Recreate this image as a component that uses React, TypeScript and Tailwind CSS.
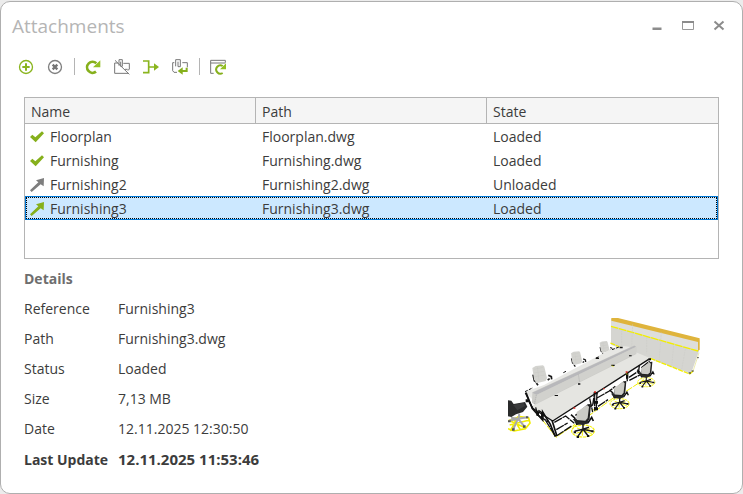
import React from "react";

type Kind = "check" | "arrow-off" | "arrow-on";

const rows: { name: string; path: string; state: string; kind: Kind; selected?: boolean }[] = [
  { name: "Floorplan", path: "Floorplan.dwg", state: "Loaded", kind: "check" },
  { name: "Furnishing", path: "Furnishing.dwg", state: "Loaded", kind: "check" },
  { name: "Furnishing2", path: "Furnishing2.dwg", state: "Unloaded", kind: "arrow-off" },
  { name: "Furnishing3", path: "Furnishing3.dwg", state: "Loaded", kind: "arrow-on", selected: true },
];

const details = [
  ["Reference", "Furnishing3"],
  ["Path", "Furnishing3.dwg"],
  ["Status", "Loaded"],
  ["Size", "7,13 MB"],
  ["Date", "12.11.2025 12:30:50"],
];

function RowIcon({ kind }: { kind: Kind }) {
  return (
    <svg viewBox="0 0 42 42" className="size-3.5 shrink-0" aria-hidden="true">
      {kind === "check" ? (
        <path d="M0 21 L7 14 L16 22 L36 4 L42 10 L17 37 Z" fill="#86b01c" />
      ) : (
        <path
          d="M0 37 L25 13 L18 7 L42 0 L41 25 L32 19 L5 42 Z"
          fill={kind === "arrow-on" ? "#86b01c" : "#7e7e7e"}
        />
      )}
    </svg>
  );
}

function ToolButton({ label, children }: { label: string; children: React.ReactNode }) {
  return (
    <button type="button" aria-label={label} className="size-4">
      <svg viewBox="0 0 48 48" className="block size-4" fill="none">
        {children}
      </svg>
    </button>
  );
}

function Separator() {
  return <div className="mx-2.5 h-[17px] w-[2px] border-r border-[#b4b4b4]" />;
}

function Toolbar() {
  return (
    <div role="toolbar" aria-label="Attachment actions" className="flex items-center px-[17px]">
      <div className="flex gap-[13px]">
        <ToolButton label="Attach">
          <circle cx="24" cy="24" r="19.5" stroke="#8ab51e" strokeWidth="4" />
          <path d="M24 13V35M13 24H35" stroke="#8ab51e" strokeWidth="6" />
        </ToolButton>
        <ToolButton label="Detach">
          <circle cx="24" cy="24" r="19.5" stroke="#808080" strokeWidth="4" />
          <path d="M17 17L31 31M31 17L17 31" stroke="#757575" strokeWidth="7" />
        </ToolButton>
      </div>
      <Separator />
      <div className="flex gap-[13px]">
        <ToolButton label="Reload">
          <path d="M33 38A16.500 16.500 0 1 1 34 13" stroke="#86b01c" strokeWidth="8" />
          <path d="M46 4V25H24Z" fill="#94c024" />
        </ToolButton>
        <ToolButton label="Unload">
          <path
            d="M12 12H2V43H43M28 13H46V31L41 34M15 20V2H25V22H20V8M3 4L46 46M33 31H41"
            stroke="#777777"
            strokeWidth="3"
          />
        </ToolButton>
        <ToolButton label="Bind">
          <path d="M0 6H17V41H0M17 24H38" stroke="#8ab51e" strokeWidth="5" />
          <path d="M33 13L48 24L33 35Z" fill="#8ab51e" />
        </ToolButton>
        <ToolButton label="Insert">
          <path
            d="M7 11H2V35L6 40H15M31 11H46V25M11 22V2H25V23H18V8"
            stroke="#777777"
            strokeWidth="3"
          />
          <path d="M44 26V36H29" stroke="#86b01c" strokeWidth="6" />
          <path d="M17 36L32 25V47Z" fill="#86b01c" />
        </ToolButton>
      </div>
      <Separator />
      <ToolButton label="Refresh list">
        <path d="M11 43H2V4H46V11M2 12H46" stroke="#777777" strokeWidth="3" />
        <path d="M38 42A12.500 12.500 0 1 1 38 21" stroke="#86b01c" strokeWidth="6" />
        <path d="M48 13V31H30Z" fill="#94c024" />
      </ToolButton>
    </div>
  );
}

function WindowButtons() {
  return (
    <div className="flex gap-[19px]">
      <button type="button" aria-label="Minimize" className="size-3">
        <svg viewBox="0 0 12 12" className="block size-3">
          <rect x="1.500" y="7.500" width="9" height="2.500" fill="#8c8c8c" />
        </svg>
      </button>
      <button type="button" aria-label="Maximize" className="size-3">
        <svg viewBox="0 0 12 12" className="block size-3" fill="none">
          <path d="M0.500 1V9.500H11.500V1" stroke="#999999" />
          <path d="M0 2H12" stroke="#8c8c8c" strokeWidth="2" />
        </svg>
      </button>
      <button type="button" aria-label="Close" className="size-3">
        <svg viewBox="0 0 12 12" className="block size-3" fill="none">
          <path d="M1.500 1.500L10.500 9.500M10.500 1.500L1.500 9.500" stroke="#8c8c8c" strokeWidth="2" />
        </svg>
      </button>
    </div>
  );
}

function BackChair({ x, y, s }: { x: number; y: number; s: number }) {
  return (
    <g transform={`translate(${x} ${y}) scale(${s})`}>
      <path d="M2 28L6 46L12 50M12 53L17 60M48 30L57 34L58 42M46 44L52 40" stroke="#1a1a1a" strokeWidth="5" fill="none" />
      <path d="M0 8L10 2L32 0L36 4L44 38L40 47L12 54L5 42Z" fill="#d3d3cf" />
      <path d="M5 12L32 6M5 23L36 18M7 34L39 29M15 5L20 45" stroke="#c9c9c5" strokeWidth="1.500" />
    </g>
  );
}

function FrontChair({ x, y, s }: { x: number; y: number; s: number }) {
  return (
    <g transform={`translate(${x} ${y}) scale(${s})`}>
      <ellipse cx="38" cy="81" rx="34" ry="18" fill="none" stroke="#f4f000" strokeWidth="3.500" strokeDasharray="9 2" />
      <path d="M20 72L64 89M18 88L59 74M36 70V95" stroke="#f4f000" strokeWidth="3" />
      <path d="M38 58V78M38 76L13 82M38 76L66 82M38 76L22 98M38 76L53 95M38 76L56 70" stroke="#1b1b1b" strokeWidth="4.500" fill="none" />
      <path d="M2 32L13 42L19 60L53 56L64 40L69 51" stroke="#111" strokeWidth="5" fill="none" />
      <path d="M7 45L48 47L55 55L39 64L17 58Z" fill="#292929" />
      <path d="M52 1L62 0L58 45L50 55L19 52L20 28Z" fill="#222" />
      <path d="M19 24L50 3L56 8L52 42L45 50L20 48Z" fill="#cbcbc6" />
      <path d="M10 82h7v6h-7zM63 79h7v6h-7zM19 96h7v6h-7zM50 93h7v6h-7z" fill="#111" />
    </g>
  );
}

function Preview() {
  return (
    <svg
      viewBox="24 36 576 369"
      className="h-[123px] w-[192px] shrink-0"
      fill="none"
      role="img"
      aria-label="Preview of Furnishing3"
    >
      {/* cabinet wall */}
      <path d="M333 42L598 106V135L573 206L333 119Z" fill="#d5d5d1" />
      <path d="M333 42L598 106L594 137L333 64Z" fill="#dededb" />
      <path d="M334 39L354 39L599 100V134L594 137V111L334 47Z" fill="#dfb43c" />
      <path d="M333 64L594 138" stroke="#f2ee00" strokeWidth="4" strokeDasharray="23 2" />
      <path d="M365 76V122M398 58L395 128M440 96V145M484 82L477 170M521 122L515 185M556 132L545 193" stroke="#cbcbc7" strokeWidth="1.500" strokeDasharray="6 2" />
      <path d="M331 114L362 127M451 160L569 207L579 199" stroke="#f2ee00" strokeWidth="4" strokeDasharray="15 3" />
      <path d="M579 199L597 143" stroke="#e3e08a" strokeWidth="2" />
      <path d="M566 204h7M575 198h6M592 158h4" stroke="#222" strokeWidth="3" />

      <BackChair x={97} y={181} s={1} />
      <BackChair x={213} y={139} s={0.76} />
      <BackChair x={299} y={108} s={0.66} />

      {/* tables */}
      <path d="M75 260L132 240L338 130L366 123L398 127L406 144L450 160L159 347Z" fill="#e7e7e4" />
      <path d="M96 303L406 141L449 159L158 347Z" fill="#e5e5e1" />
      <path d="M97 262L403 121L409 126V147L105 299L96 293Z" fill="#cdcdc9" />
      <path d="M97 263L403 122L408 125L110 269Z" fill="#b8b8bb" />
      <path d="M110 270L408 126V145L108 296Z" fill="#d1d1cd" />
      <path d="M235 208L239 232M109 270L103 297" stroke="#aaa" strokeWidth="2" strokeDasharray="4 2" />
      <path d="M75 260L99 248M190 203L200 198M288 159L298 155M336 134L357 126" stroke="#111" strokeWidth="3" strokeDasharray="9 4" />

      <path d="M125 342L168 397L225 358M220 366L286 318L352 270M378 259L432 224M276 317L286 311" stroke="#f2ee00" strokeWidth="3" strokeDasharray="22 4" />
      <path d="M76 263L97 309L158 348L446 163" stroke="#111" strokeWidth="4" />
      <path d="M78 263L97 311L128 345L128 321L151 358L165 393L170 391L156 346" stroke="#111" strokeWidth="5" />
      <path d="M86 288L100 312M107 307L113 331L145 350M115 316L132 327M136 345L164 390M163 352L197 333L223 355M169 374L203 354M169 393L215 363M226 331L278 300L284 263V317M269 280L278 321M291 261L289 309M291 279L328 258L346 244M294 304L324 284M380 203L382 229M387 217L416 198M388 226L423 208M418 181L415 207M424 188L449 168" stroke="#111" strokeWidth="4" strokeDasharray="26 2" />
      <path d="M281 261h12v7h-12zM280 288h14v8h-14zM282 307h12v9h-12zM77 283h9v9h-9zM109 321h8v11h-8zM123 322h8v16h-8zM378 204h7v17h-7z" fill="#101010" />
      <path d="M164 270h10v3h-10zM234 235h7v4h-7zM334 179h10v4h-10zM387 151h8v3h-8zM445 160h8v6h-8zM287 158h10v4h-10zM359 125h9v5h-9z" fill="#111" />
      <path d="M220 307h6v4h-6zM282 259h6v4h-6zM377 199h6v4h-6zM309 250h5v3h-5z" fill="#d92a20" />
      <path d="M335 182l6 3M378 206l5 2" stroke="#f2ee00" strokeWidth="2" />

      <FrontChair x={410} y={170} s={0.76} />
      <FrontChair x={327} y={228} s={0.84} />
      <FrontChair x={211} y={297} s={1} />

      {/* chair at the left edge */}
      <path d="M25 347L60 335L86 339L90 354L76 371L42 378L24 371M31 348L77 369M29 360L89 345M40 340L62 376M55 334L31 378" stroke="#f2ee00" strokeWidth="5" />
      <path d="M58 326L55 345M54 341L27 347M54 341L82 337M54 341L40 372M54 341L72 363M54 341L33 338" stroke="#a9a9ac" strokeWidth="6" />
      <path d="M24 286L34 287L41 297L75 291L82 305L69 321L48 328L34 336L24 334Z" fill="#292a2b" />
      <path d="M40 300L70 293L75 303L52 316Z" fill="#3a3b3c" />
      <path d="M24 346h8v6h-8zM78 334h7v6h-7zM36 370h8v7h-8zM69 361h8v7h-8z" fill="#555" />
    </svg>
  );
}

export default function App() {
  return (
    <div className="flex min-h-screen bg-[#ececec] pt-px font-['Open_Sans','Noto_Sans',sans-serif] text-[14px] text-[#3c3c3c]">
      <main className="flex-1 rounded-[10px] border border-[#afafaf] bg-white">
        <header className="flex items-center justify-between pt-2 pr-[17px] pl-[11px]">
          <h1 className="text-[19px] leading-8 text-[#b5b5b5]">Attachments</h1>
          <WindowButtons />
        </header>

        <div className="pt-4">
          <Toolbar />
        </div>

        <div className="mx-[23px] mt-[22px] h-[162px] border border-[#b4b4b4]">
          <table className="w-full table-fixed border-separate border-spacing-0 text-left">
            <thead>
              <tr className="h-[26px] bg-[#f5f5f5]">
                <th scope="col" className="border-r border-b border-[#b4b4b4] px-1.5 pt-[3px] pb-0 leading-5 font-normal">Name</th>
                <th scope="col" className="border-r border-b border-[#b4b4b4] px-1.5 pt-[3px] pb-0 leading-5 font-normal">Path</th>
                <th scope="col" className="border-b border-[#b4b4b4] px-1.5 pt-[3px] pb-0 leading-5 font-normal">State</th>
              </tr>
            </thead>
            <tbody>
              {rows.map((row) => (
                <tr
                  key={row.name}
                  aria-selected={row.selected}
                  className={
                    row.selected
                      ? "relative h-6 bg-[#cce8ff] outline-1 -outline-offset-1 outline-[#0078d7]"
                      : "h-6"
                  }
                >
                  <td
                    className={
                      row.selected
                        ? "px-[5px] pt-0.5 pb-0 after:absolute after:inset-px after:border after:border-dotted after:border-black"
                        : "px-[5px] pt-0.5 pb-0"
                    }
                  >
                    <div className="flex items-center gap-1.5 leading-[22px]">
                      <RowIcon kind={row.kind} />
                      {row.name}
                    </div>
                  </td>
                  <td className="px-1.5 pt-0.5 pb-0 leading-[22px]">{row.path}</td>
                  <td className="px-1.5 pt-0.5 pb-0 leading-[22px]">{row.state}</td>
                </tr>
              ))}
            </tbody>
          </table>
        </div>

        <section className="mt-[5px] flex items-start justify-between pr-[42px] pl-[23px]">
          <div className="leading-[30px]">
            <h2 className="font-bold text-[#6e6e6e]">Details</h2>
            <dl className="grid grid-cols-[94px_auto] items-baseline">
              {details.map(([label, value]) => (
                <React.Fragment key={label}>
                  <dt>{label}</dt>
                  <dd>{value}</dd>
                </React.Fragment>
              ))}
              <dt className="font-bold whitespace-nowrap">Last Update</dt>
              <dd className="text-[15px] font-bold">12.11.2025 11:53:46</dd>
            </dl>
          </div>
          <div className="pt-[53px]">
            <Preview />
          </div>
        </section>
      </main>
    </div>
  );
}
